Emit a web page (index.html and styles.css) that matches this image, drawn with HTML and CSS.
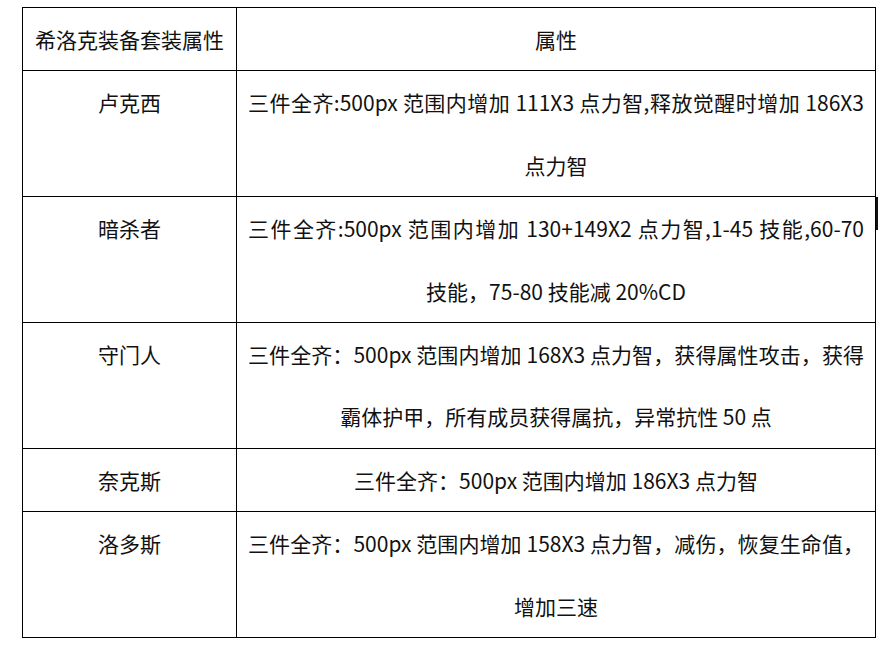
FILE: index.html
```html
<!DOCTYPE html>
<html lang="zh-CN">
<head>
<meta charset="utf-8">
<title>希洛克装备套装属性</title>
<link rel="stylesheet" href="styles.css">
</head>
<body>
<div class="page">
  <table class="sets">
    <tr>
      <td class="name">希洛克装备套装属性</td>
      <td class="desc">属性</td>
    </tr>
    <tr>
      <td class="name">卢克西</td>
      <td class="desc"><span class="line full">三件全齐:500px 范围内增加 111X3 点力智,释放觉醒时增加 186X3</span><span class="line">点力智</span></td>
    </tr>
    <tr>
      <td class="name">暗杀者</td>
      <td class="desc"><span class="line full">三件全齐:500px 范围内增加 130+149X2 点力智,1-45 技能,60-70</span><span class="line">技能，75-80 技能减 20%CD</span></td>
    </tr>
    <tr>
      <td class="name">守门人</td>
      <td class="desc"><span class="line full">三件全齐：500px 范围内增加 168X3 点力智，获得属性攻击，获得</span><span class="line">霸体护甲，所有成员获得属抗，异常抗性 50 点</span></td>
    </tr>
    <tr>
      <td class="name">奈克斯</td>
      <td class="desc"><span class="line">三件全齐：500px 范围内增加 186X3 点力智</span></td>
    </tr>
    <tr>
      <td class="name">洛多斯</td>
      <td class="desc"><span class="line full">三件全齐：500px 范围内增加 158X3 点力智，减伤，恢复生命值，</span><span class="line">增加三速</span></td>
    </tr>
  </table>
  <div class="caret"></div>
</div>
</body>
</html>
```

FILE: styles.css
```css
html, body {
  margin: 0;
  padding: 0;
  background: #ffffff;
}

.page {
  position: relative;
  width: 881px;
  height: 646px;
  padding: 7px 0 0 22px;
  box-sizing: border-box;
}

.sets {
  border-collapse: collapse;
  width: 854px;
  table-layout: fixed;
  font-family: "Noto Sans CJK SC", "Noto Sans", sans-serif;
  font-size: 21px;
  color: #111111;
}

.sets td {
  border: 1px solid #000000;
  padding: 0;
  line-height: 62.4px;
  text-align: center;
  vertical-align: top;
}

.sets td.name {
  width: 213px;
}

.sets td.desc {
  padding: 0 11px 0 11px;
}

.line {
  display: block;
  white-space: nowrap;
}

.line.full {
  text-align: justify;
  text-align-last: justify;
  white-space: normal;
}

.caret {
  position: absolute;
  left: 876px;
  top: 197px;
  width: 2px;
  height: 33px;
  background: #111111;
}
```
